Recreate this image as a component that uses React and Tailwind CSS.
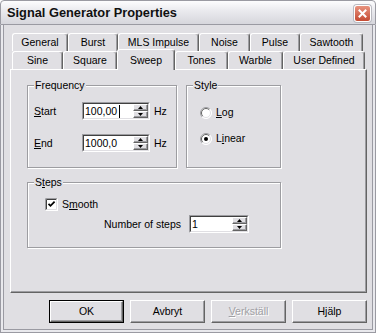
import React from "react";

function Tab({ className, children, sel }) {
  return (
    <div
      className={
        "flex items-center justify-center bg-[#e0dfe3] border-l border-t border-r border-l-white border-t-white border-r-[#646464] rounded-t-[3px] shadow-[inset_-1px_0_0_#9d9da1] " +
        (sel ? "h-[21px] -mt-[2px] relative z-10 " : "h-[18px] ") +
        className
      }
    >
      {children}
    </div>
  );
}

function Arrow({ up }) {
  return (
    <svg width="5" height="3" viewBox="0 0 5 3" className="block">
      {up ? <polygon points="2.5,0 5,3 0,3" fill="#000" /> : <polygon points="0,0 5,0 2.5,3" fill="#000" />}
    </svg>
  );
}

function SpinBtn({ up }) {
  return (
    <div className="flex-1 flex items-center justify-center bg-[#e0dfe3] border-t border-l border-t-white border-l-white border-b border-r border-b-[#646464] border-r-[#646464] shadow-[inset_-1px_-1px_0_#9d9da1]">
      <Arrow up={up} />
    </div>
  );
}

function Spin({ className, value, cursor }) {
  return (
    <div className={"h-[18px] border-t border-l border-t-[#9d9da1] border-l-[#9d9da1] border-b border-r border-b-white border-r-white " + className}>
      <div className="h-full flex border-t border-l border-t-[#404040] border-l-[#404040] border-b border-r border-b-[#e0dfe3] border-r-[#e0dfe3] bg-white">
        <div className="flex-1 flex items-center pl-[1px]">
          <span>{value}</span>
          {cursor && <span className="ml-[2px] w-px h-[13px] bg-black" />}
        </div>
        <div className="w-[15px] flex flex-col">
          <SpinBtn up />
          <SpinBtn />
        </div>
      </div>
    </div>
  );
}

function Group({ className, label, children }) {
  return (
    <div className={"relative border border-[#9d9da1] shadow-[1px_1px_0_#fff,inset_1px_1px_0_#fff] " + className}>
      <span className="absolute -top-[7px] left-[6px] px-[1px] bg-[#e0dfe3] leading-[13px]">{label}</span>
      {children}
    </div>
  );
}

function Radio({ checked }) {
  return (
    <svg width="12" height="12" viewBox="0 0 12 12" className="block shrink-0">
      <circle cx="6" cy="6" r="5.5" fill="#fff" />
      <path d="M2.1 9.9 A5.5 5.5 0 0 1 9.9 2.1" stroke="#9d9da1" strokeWidth="1" fill="none" />
      <path d="M2.8 9.2 A4.5 4.5 0 0 1 9.2 2.8" stroke="#646464" strokeWidth="1" fill="none" />
      <path d="M2.1 9.9 A5.5 5.5 0 0 0 9.9 2.1" stroke="#ffffff" strokeWidth="1" fill="none" />
      <path d="M2.8 9.2 A4.5 4.5 0 0 0 9.2 2.8" stroke="#e0dfe3" strokeWidth="1" fill="none" />
      {checked && <circle cx="6" cy="6" r="2" fill="#000" />}
    </svg>
  );
}

function Check() {
  return (
    <svg width="13" height="13" viewBox="0 0 13 13" className="block shrink-0">
      <rect x="0" y="0" width="13" height="13" fill="#fff" />
      <path d="M0.5 12.5 V0.5 H12.5" stroke="#9d9da1" fill="none" />
      <path d="M1.5 11.5 V1.5 H11.5" stroke="#404040" fill="none" />
      <path d="M0.5 12.5 H12.5 V0.5" stroke="#fff" fill="none" />
      <path d="M1.5 11.5 H11.5 V1.5" stroke="#e0dfe3" fill="none" />
      <path d="M3.5 5.8 L5.5 7.8 L9.6 3.7" stroke="#000" strokeWidth="1.8" fill="none" />
    </svg>
  );
}

function Btn({ children, def, disabled }) {
  const inner = (
    <div className="h-full w-full flex items-center justify-center bg-[#e0dfe3] border-t border-l border-t-white border-l-white border-b border-r border-b-[#646464] border-r-[#646464] shadow-[inset_-1px_-1px_0_#9d9da1]">
      <span className={disabled ? "text-[#a0a0a4] [text-shadow:1px_1px_0_#fff]" : ""}>{children}</span>
    </div>
  );
  return (
    <div className={"w-[75px] h-[23px] " + (def ? "border border-black" : "")}>{inner}</div>
  );
}

export default function App() {
  return (
    <div className="w-[376px] h-[333px] font-['Liberation_Sans',Arial,sans-serif] text-[10.5px] leading-[13px] text-black select-none">
      <div className="h-[25px] flex items-center justify-between pl-[6px] pr-[4px] border border-[#9a9aa2] rounded-t-[4px] bg-[linear-gradient(#fdfdfe,#ebebef_40%,#d6d6dc)]">
        <span className="text-[12.8px] leading-[16px] font-bold text-[#111]">Signal Generator Properties</span>
        <div className="w-[17px] h-[17px] mt-[1px] rounded-[3px] border border-white bg-[linear-gradient(#e8937f,#c44a32)] shadow-[0_0_0_1px_#b9b9c0] flex items-center justify-center">
          <svg width="9" height="9" viewBox="0 0 9 9">
            <path d="M1.5 1.5 L7.5 7.5 M7.5 1.5 L1.5 7.5" stroke="#fff" strokeWidth="2" strokeLinecap="square" />
          </svg>
        </div>
      </div>
      <div className="h-[308px] border-x border-b border-[#9a9aa2] bg-[#e9e9ed] px-[2px] pb-[2px]">
        <div className="h-full border-x border-b border-[#9a9aa2] bg-[#e0dfe3] pt-[8px] pl-[6px]">
          <div className="w-[357px]">
            <div className="flex pl-[2px] h-[18px]">
              <Tab className="w-[56px]">General</Tab>
              <Tab className="w-[50px]">Burst</Tab>
              <Tab className="w-[81px]">MLS Impulse</Tab>
              <Tab className="w-[51px]">Noise</Tab>
              <Tab className="w-[50px]">Pulse</Tab>
              <Tab className="w-[63px]">Sawtooth</Tab>
            </div>
            <div className="flex pl-[2px] h-[18px]">
              <Tab className="w-[51px]">Sine</Tab>
              <Tab className="w-[54px]">Square</Tab>
              <Tab className="w-[58px]" sel>Sweep</Tab>
              <Tab className="w-[53px]">Tones</Tab>
              <Tab className="w-[55px]">Warble</Tab>
              <Tab className="w-[82px]">User Defined</Tab>
            </div>
            <div className="h-[224px] bg-[#e0dfe3] border-l border-t border-l-white border-t-white border-r border-b border-r-[#646464] border-b-[#646464] shadow-[inset_-1px_-1px_0_#9d9da1] pl-[16px] pt-[15px]">
              <div className="flex gap-[9px]">
                <Group className="w-[150px] h-[83px]" label="Frequency">
                  <div className="pt-[16px] pl-[6px]">
                    <div className="flex items-center h-[18px]">
                      <span className="w-[48px]"><u>S</u>tart</span>
                      <Spin className="w-[68px]" value="100,00" cursor />
                      <span className="ml-[4px]">Hz</span>
                    </div>
                    <div className="flex items-center h-[18px] mt-[14px]">
                      <span className="w-[48px]"><u>E</u>nd</span>
                      <Spin className="w-[68px]" value="1000,0" />
                      <span className="ml-[4px]">Hz</span>
                    </div>
                  </div>
                </Group>
                <Group className="w-[95px] h-[83px]" label="Style">
                  <div className="pt-[20px] pl-[13px]">
                    <div className="flex items-center gap-[4px] h-[13px]">
                      <Radio />
                      <span><u>L</u>og</span>
                    </div>
                    <div className="flex items-center gap-[4px] h-[13px] mt-[13px]">
                      <Radio checked />
                      <span>L<u>i</u>near</span>
                    </div>
                  </div>
                </Group>
              </div>
              <Group className="w-[254px] h-[66px] mt-[14px]" label={<span>S<u>t</u>eps</span>}>
                <div className="pt-[15px] pl-[17px]">
                  <div className="flex items-center gap-[4px] h-[13px]">
                    <Check />
                    <span>S<u>m</u>ooth</span>
                  </div>
                  <div className="flex items-center h-[18px] mt-[4px] ml-[59px]">
                    <span className="w-[85px]">Number of steps</span>
                    <Spin className="w-[60px]" value="1" />
                  </div>
                </div>
              </Group>
            </div>
          </div>
          <div className="flex gap-[6px] mt-[7px] ml-[39px]">
            <Btn def>OK</Btn>
            <Btn>Avbryt</Btn>
            <Btn disabled><u>V</u>erkställ</Btn>
            <Btn>Hjälp</Btn>
          </div>
        </div>
      </div>
    </div>
  );
}
